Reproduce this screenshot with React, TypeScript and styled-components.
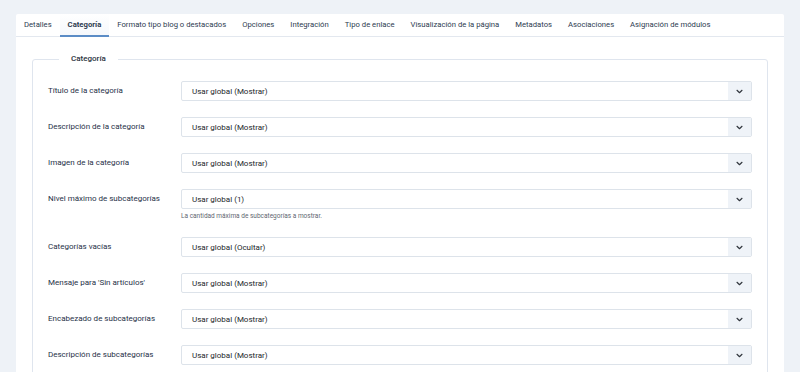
import * as React from "react"
import styled, { createGlobalStyle } from 'styled-components'

const GlobalStyle = createGlobalStyle`
  html, body {
    margin: 0;
    padding: 0;
    overflow: hidden;
    background: #eef2f7;
    font-family: Roboto, "Liberation Sans", sans-serif;
    -webkit-font-smoothing: antialiased;
  }
`;

const tabs = [
  'Detalles',
  'Categoría',
  'Formato tipo blog o destacados',
  'Opciones',
  'Integración',
  'Tipo de enlace',
  'Visualización de la página',
  'Metadatos',
  'Asociaciones',
  'Asignación de módulos',
];

interface Field {
  label: string;
  value: string;
  help?: string;
}

const fields: Field[] = [
  { label: 'Título de la categoría', value: 'Usar global (Mostrar)' },
  { label: 'Descripción de la categoría', value: 'Usar global (Mostrar)' },
  { label: 'Imagen de la categoría', value: 'Usar global (Mostrar)' },
  {
    label: 'Nivel máximo de subcategorías',
    value: 'Usar global (1)',
    help: 'La cantidad máxima de subcategorías a mostrar.',
  },
  { label: 'Categorías vacías', value: 'Usar global (Ocultar)' },
  { label: "Mensaje para 'Sin artículos'", value: 'Usar global (Mostrar)' },
  { label: 'Encabezado de subcategorías', value: 'Usar global (Mostrar)' },
  { label: 'Descripción de subcategorías', value: 'Usar global (Mostrar)' },
];

const Chevron = () => (
  <svg width="7" height="5" viewBox="0 0 7 5" fill="none">
    <path d="M1 1.3 L3.5 3.7 L6 1.3" stroke="#33383f" strokeWidth="1.2" strokeLinecap="round" strokeLinejoin="round" />
  </svg>
);

const App: React.FC = () => {
  return (
    <>
      <GlobalStyle />
      <Page>
        <Card>
          <TabBar>
            {tabs.map((t) => (
              <Tab key={t} $active={t === 'Categoría'}>{t}</Tab>
            ))}
          </TabBar>
          <Body>
            <Fieldset>
              <Legend>Categoría</Legend>
              {fields.map((f) => (
                <Row key={f.label}>
                  <Label>{f.label}</Label>
                  <Control>
                    <Select>
                      <Value>{f.value}</Value>
                      <Caret><Chevron /></Caret>
                    </Select>
                    {f.help && <Help>{f.help}</Help>}
                  </Control>
                </Row>
              ))}
            </Fieldset>
          </Body>
        </Card>
      </Page>
    </>
  )
}
export default App

const Page = styled.div`
  padding: 14px 16px 0 16px;
`;

const Card = styled.div`
  background: #ffffff;
  border-radius: 2px 2px 0 0;
`;

const TabBar = styled.div`
  display: flex;
  height: 22px;
  border-bottom: 1px solid #e3e8ef;
`;

const Tab = styled.div<{ $active?: boolean }>`
  display: flex;
  align-items: center;
  padding: 0 8px;
  font-size: 7.7px;
  color: #2d3b50;
  font-weight: ${({ $active }) => ($active ? 700 : 400)};
  white-space: nowrap;
  border-bottom: 2px solid ${({ $active }) => ($active ? '#5b8cc6' : 'transparent')};
  background: ${({ $active }) => ($active ? 'linear-gradient(#ffffff, #f5f8fc)' : 'transparent')};
  margin-bottom: -1px;
`;

const Body = styled.div`
  padding: 17px 16px 0 16px;
`;

const Fieldset = styled.fieldset`
  margin: 0;
  border: 1px solid #dfe5ee;
  border-radius: 3px;
  padding: 17px 15px 40px 15px;
  min-width: 0;
`;

const Legend = styled.legend`
  margin-left: 11px;
  padding: 0 12px;
  font-size: 8px;
  font-weight: 500;
  color: #2a3340;
  line-height: 10px;
`;

const Row = styled.div`
  display: flex;
  align-items: flex-start;
  margin-bottom: 16px;
`;

const Label = styled.div`
  width: 133px;
  flex-shrink: 0;
  font-size: 8px;
  line-height: 19px;
  color: #1f3148;
`;

const Control = styled.div`
  flex: 1;
  min-width: 0;
`;

const Select = styled.div`
  display: flex;
  height: 20px;
  box-sizing: border-box;
  border: 1px solid #dde3ea;
  border-radius: 2px;
  overflow: hidden;
`;

const Value = styled.div`
  flex: 1;
  display: flex;
  align-items: center;
  padding-left: 10px;
  font-size: 8px;
  color: #22262a;
`;

const Caret = styled.div`
  width: 23px;
  display: flex;
  align-items: center;
  justify-content: center;
  background: #eff3f8;
`;

const Help = styled.div`
  margin-top: 3px;
  font-size: 6.5px;
  color: #5f6771;
  line-height: 9px;
`;
